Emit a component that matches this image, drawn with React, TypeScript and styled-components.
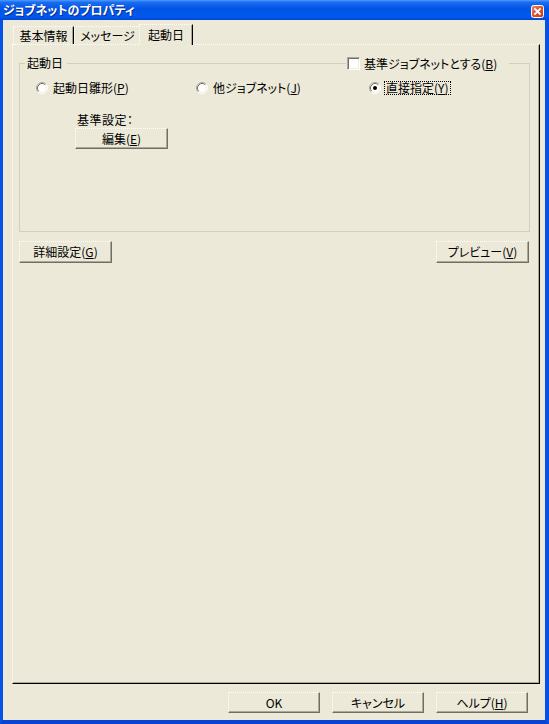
import React from "react";
import styled, { createGlobalStyle } from "styled-components";

const FONT = `"Noto Sans CJK JP", "Noto Sans", sans-serif`;

const Global = createGlobalStyle`
  html, body { margin: 0; padding: 0; background: #ECE9D8; }
  body { font-family: ${FONT}; font-size: 12px; color: #000; }
  * { box-sizing: border-box; }
`;

const Window = styled.div`
  width: 549px;
  height: 724px;
  display: flex;
  flex-direction: column;
  overflow: hidden;
  font-feature-settings: "palt";
`;

const TitleBar = styled.div`
  height: 20px;
  flex: none;
  display: flex;
  align-items: center;
  justify-content: space-between;
  padding: 0 5px 0 3px;
  background: linear-gradient(
    to bottom,
    #4a9cff 0%,
    #1b6cf0 12%,
    #0055e5 45%,
    #0058ee 85%,
    #0045d0 100%
  );
  color: #fff;
  font-weight: bold;
  font-size: 12px;
  line-height: 14px;
  text-shadow: 1px 1px #0b2c8a;
`;

const CloseBox = styled.div`
  width: 13px;
  height: 13px;
  margin-top: 3px;
  display: flex;
`;

const Frame = styled.div`
  flex: 1;
  display: flex;
  flex-direction: column;
  background: #ece9d8;
  border-left: 3px solid #0552e6;
  border-right: 4px solid #0552e6;
  border-bottom: 4px solid #0843d4;
`;

const TabStrip = styled.div`
  display: flex;
  align-items: flex-end;
  margin: 4px 0 -1px 0;
  padding-left: 10px;
  position: relative;
  z-index: 1;
  height: 21px;
`;

const Tab = styled.div<{ $active?: boolean; $w: number }>`
  width: ${(p) => p.$w}px;
  height: ${(p) => (p.$active ? 21 : 18)}px;
  margin: 0 ${(p) => (p.$active ? -2 : 0)}px ${(p) => (p.$active ? 0 : 1)}px;
  display: flex;
  align-items: center;
  justify-content: center;
  border-top: 1px dotted #fff;
  border-left: 1px dotted #fff;
  border-right: 1px solid #000;
  box-shadow: inset -1px 0 #aca899;
  background: #ece9d8;
  position: relative;
  z-index: ${(p) => (p.$active ? 2 : 1)};
  line-height: 14px;
  white-space: nowrap;
`;

const Panel = styled.div`
  flex: 1;
  margin: 0 5px 0 9px;
  border-top: 1px dotted #fff;
  border-left: 1px dotted #fff;
  border-right: 1px solid #000;
  border-bottom: 1px solid #000;
  box-shadow: inset -1px -1px #aca899;
  padding: 18px 0 0 6px;
  display: flex;
  flex-direction: column;
`;

const GroupBox = styled.div`
  width: 511px;
  height: 169px;
  border: 1px solid #d0d0bf;
  position: relative;
  padding: 17px 0 0 16px;
  display: flex;
  flex-direction: column;
`;

const GroupCaption = styled.span`
  position: absolute;
  left: 5px;
  top: -8px;
  padding: 0 4px 0 2px;
  background: #ece9d8;
  line-height: 14px;
`;

const CheckCaption = styled.label`
  position: absolute;
  left: 326px;
  top: -8px;
  width: 163px;
  height: 15px;
  display: flex;
  align-items: center;
  gap: 4px;
  padding-left: 1px;
  background: #ece9d8;
  line-height: 14px;
  white-space: nowrap;
`;

const CheckBox = styled.span`
  width: 13px;
  height: 13px;
  flex: none;
  background: #fff;
  border: 1px solid;
  border-color: #aca899 #fff #fff #aca899;
  box-shadow: inset 1px 1px #716f64, inset -1px -1px #f1efe2;
`;

const RadioRow = styled.div`
  display: grid;
  grid-template-columns: 160px 173px auto;
  height: 14px;
`;

const RadioItem = styled.label`
  display: flex;
  align-items: center;
  gap: 5px;
  line-height: 14px;
  white-space: nowrap;
`;

const Focus = styled.span`
  border: 1px dotted #000;
  padding: 0 1px;
  margin-left: -2px;
  line-height: 12px;
`;

const BaseBlock = styled.div`
  display: flex;
  flex-direction: column;
  align-items: flex-start;
  padding-left: 39px;
  margin-top: 18px;
`;

const BaseLabel = styled.span`
  margin-left: 2px;
  line-height: 14px;
  letter-spacing: 0.5px;
`;

const Button = styled.button<{ $w: number; $h?: number }>`
  width: ${(p) => p.$w}px;
  height: ${(p) => p.$h ?? 21}px;
  flex: none;
  padding: 0;
  margin: 0;
  font-family: ${FONT};
  font-size: 12px;
  font-feature-settings: "palt";
  line-height: 14px;
  color: #000;
  background: #ece9d8;
  border-top: 1px dotted #fff;
  border-left: 1px dotted #fff;
  border-right: 1px solid #716f64;
  border-bottom: 1px solid #716f64;
  border-radius: 0;
  box-shadow: inset -1px -1px #aca899;
  display: flex;
  align-items: center;
  justify-content: center;
  white-space: nowrap;
`;

const EditButton = styled(Button)`
  margin-top: 1px;
`;

const PanelButtons = styled.div`
  width: 510px;
  display: flex;
  justify-content: space-between;
  margin-top: 9px;
`;

const DialogButtons = styled.div`
  display: flex;
  justify-content: flex-end;
  gap: 12px;
  padding: 8px 17px 7px 0;
`;

const Radio = ({ checked }: { checked?: boolean }) => (
  <svg width="12" height="12" viewBox="0 0 12 12" style={{ flex: "none" }}>
    <circle cx="6" cy="6" r="5" fill="#fff" />
    <path d="M2.11 9.89 A5.5 5.5 0 0 1 9.89 2.11" fill="none" stroke="#aca899" />
    <path d="M9.89 2.11 A5.5 5.5 0 0 1 2.11 9.89" fill="none" stroke="#fff" />
    <path d="M2.82 9.18 A4.5 4.5 0 0 1 9.18 2.82" fill="none" stroke="#716f64" />
    <path d="M9.18 2.82 A4.5 4.5 0 0 1 2.82 9.18" fill="none" stroke="#f1efe2" />
    {checked && <circle cx="6" cy="6" r="2" fill="#000" />}
  </svg>
);

const CloseIcon = () => (
  <svg width="13" height="13" viewBox="0 0 13 13">
    <defs>
      <linearGradient id="cg" x1="0" y1="0" x2="1" y2="1">
        <stop offset="0" stopColor="#f08a6a" />
        <stop offset="0.5" stopColor="#e0502c" />
        <stop offset="1" stopColor="#c4371a" />
      </linearGradient>
    </defs>
    <rect x="0.5" y="0.5" width="12" height="12" rx="2" fill="url(#cg)" stroke="#fff" />
    <path d="M4 4 L9 9 M9 4 L4 9" stroke="#fff" strokeWidth="1.8" strokeLinecap="square" />
  </svg>
);

export default function App() {
  return (
    <>
      <Global />
      <Window>
        <TitleBar>
          <span>ジョブネットのプロパティ</span>
          <CloseBox>
            <CloseIcon />
          </CloseBox>
        </TitleBar>
        <Frame>
          <TabStrip>
            <Tab $w={61}>基本情報</Tab>
            <Tab $w={67}>メッセージ</Tab>
            <Tab $w={54} $active>
              起動日
            </Tab>
          </TabStrip>
          <Panel>
            <GroupBox>
              <GroupCaption>起動日</GroupCaption>
              <CheckCaption>
                <CheckBox />
                <span>
                  基準ジョブネットとする(<u>B</u>)
                </span>
              </CheckCaption>
              <RadioRow>
                <RadioItem>
                  <Radio />
                  <span>
                    起動日雛形(<u>P</u>)
                  </span>
                </RadioItem>
                <RadioItem>
                  <Radio />
                  <span>
                    他ジョブネット(<u>J</u>)
                  </span>
                </RadioItem>
                <RadioItem>
                  <Radio checked />
                  <Focus>
                    直接指定(<u>Y</u>)
                  </Focus>
                </RadioItem>
              </RadioRow>
              <BaseBlock>
                <BaseLabel>基準設定：</BaseLabel>
                <EditButton $w={93}>
                  編集(<u>E</u>)
                </EditButton>
              </BaseBlock>
            </GroupBox>
            <PanelButtons>
              <Button $w={93} $h={22}>
                詳細設定(<u>G</u>)
              </Button>
              <Button $w={93} $h={22}>
                プレビュー(<u>V</u>)
              </Button>
            </PanelButtons>
          </Panel>
          <DialogButtons>
            <Button $w={92}>OK</Button>
            <Button $w={92}>キャンセル</Button>
            <Button $w={92}>
              ヘルプ(<u>H</u>)
            </Button>
          </DialogButtons>
        </Frame>
      </Window>
    </>
  );
}
